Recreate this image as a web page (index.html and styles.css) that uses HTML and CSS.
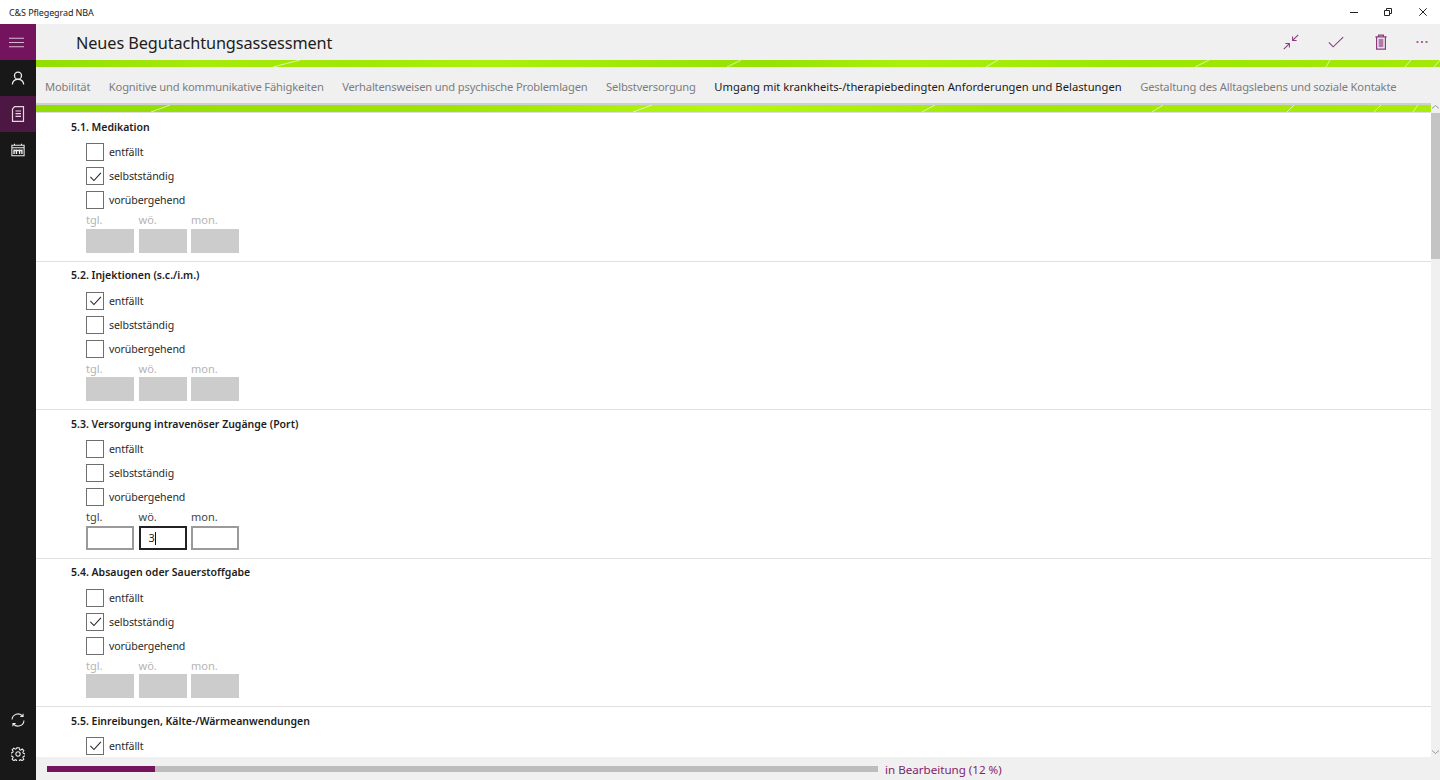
FILE: index.html
```html
<!DOCTYPE html>
<html lang="de">
<head>
<meta charset="utf-8">
<title>C&amp;S Pflegegrad NBA</title>
<link rel="stylesheet" href="styles.css">
</head>
<body>
<div class="titlebar">
  <span class="app-name">C&amp;S Pflegegrad NBA</span>
  <div class="win-controls">
    <svg class="win-ic" viewBox="0 0 8 8"><path d="M0 4.500h8" /></svg>
    <svg class="win-ic" viewBox="0 0 8 8"><path d="M.5 2.500h5v5h-5zM2.500 2.500v-2h5v5h-2" /></svg>
    <svg class="win-ic" viewBox="0 0 8 8"><path d="M.3.300l7.400 7.400M7.700.300l-7.400 7.400" /></svg>
  </div>
</div>
<div class="app">
  <nav class="sidebar">
    <button class="nav-btn nav-menu"><svg viewBox="0 0 16 16" class="nav-ic"><path d="M0 3.500h16M0 8h16M0 12.500h16"/></svg></button>
    <button class="nav-btn"><svg viewBox="0 0 16 16" class="nav-ic ic-bold"><circle cx="8" cy="5.300" r="4"/><path d="M1.500 15.500c.3-3.600 3-6 6.500-6s6.200 2.400 6.500 6"/></svg></button>
    <button class="nav-btn nav-active"><svg viewBox="0 0 16 16" class="nav-ic ic-doc"><path d="M4.500.7h9v14.600H2.500V3zM5.500 5h5.500M5.500 7.700h5.500M5.500 10.400h5.500"/></svg></button>
    <button class="nav-btn"><svg viewBox="0 0 16 16" class="nav-ic"><path d="M1 2.500h14v12H1zM4 .8v2M12 .8v2M1 5.500h14"/><path class="ic-thick" d="M3.500 7.500v5M6.200 7.500v5M9.800 7.500v5M12.500 7.500v5M3.500 8.500h9"/></svg></button>
    <div class="nav-spacer"></div>
    <button class="nav-btn nav-low"><svg viewBox="0 0 16 16" class="nav-ic"><path d="M1.200 7.500A6.800 6.800 0 0 1 13.300 3.600M14.800 8.500A6.800 6.800 0 0 1 2.700 12.400M13.800 .8v3.200h-3.200M2.200 15.200V12h3.200"/></svg></button>
    <button class="nav-btn nav-low"><svg viewBox="0 0 16 16" class="nav-ic"><circle cx="8" cy="8" r="2.500"/><path d="M6.700 .8h2.600l.4 2.100 1.300.6 1.800-1.200 1.900 1.900-1.200 1.800.6 1.300 2.100.4v2.600l-2.100.4-.6 1.300 1.200 1.800-1.900 1.900-1.800-1.200-1.300.6-.4 2.100H6.700l-.4-2.100-1.300-.6-1.800 1.200-1.900-1.900 1.200-1.800-.6-1.300-2.100-.4V6.700l2.100-.4.600-1.300-1.200-1.800 1.900-1.900 1.800 1.200 1.300-.6z"/></svg></button>
  </nav>
  <main class="main">
    <header class="pagehead">
      <h1 class="pagetitle">Neues Begutachtungsassessment</h1>
      <div class="actions">
        <svg class="act-ic" viewBox="0 0 20 20"><path d="M19 1l-7 7M12 3v5h5M1 19l7-7M3 12h5v5"/></svg>
        <svg class="act-ic" viewBox="0 0 20 20"><path d="M1 10.500l5.500 5.500L19 4"/></svg>
        <svg class="act-ic act-trash" viewBox="0 0 20 20"><path d="M3 3.500h14M7 3.500V1.500h6v2M4.500 3.500v15.500h11V3.500"/><rect class="act-fill" x="7" y="6" width="6" height="10.500"/></svg>
        <svg class="act-more" viewBox="0 0 12 16"><path d="M.5 8h2M5 8h2M9.500 8h2"/></svg>
      </div>
    </header>
    <div class="stripe stripe-a">
      <svg class="slashes" viewBox="0 0 1404 7" preserveAspectRatio="none">
        <path d="M237 7L264 0M691 7L705 0M950 7L962 0M1159 7L1173 0M1290 7L1294 0M1369 7L1375 0M1398 7L1404 0"/>
      </svg>
    </div>
    <div class="tabs">
      <span class="tab">Mobilität</span>
      <span class="tab">Kognitive und kommunikative Fähigkeiten</span>
      <span class="tab">Verhaltensweisen und psychische Problemlagen</span>
      <span class="tab">Selbstversorgung</span>
      <span class="tab tab-active">Umgang mit krankheits-/therapiebedingten Anforderungen und Belastungen</span>
      <span class="tab">Gestaltung des Alltagslebens und soziale Kontakte</span>
    </div>
    <div class="body-row">
      <div class="content">
        <div class="stripe stripe-b">
          <svg class="slashes" viewBox="0 0 1395 7" preserveAspectRatio="none">
            <path d="M115 7L134 0M597 7L616 0M886 7L899 0M1116 7L1127 0M1251 7L1258 0M1338 7L1345 0M1377 7L1382 0"/>
          </svg>
        </div>
        <div class="form">
          <section class="item">
            <h2 class="item-title">5.1. Medikation</h2>
            <label class="check"><span class="box"></span>entfällt</label>
            <label class="check"><span class="box"><svg viewBox="0 0 14 14" class="tick"><path d="M1.500 7.500l3.800 3.800L12.800 3"/></svg></span>selbstständig</label>
            <label class="check"><span class="box"></span>vorübergehend</label>
            <div class="freq freq-off">
              <div class="f"><span class="f-label">tgl.</span><span class="f-input"></span></div>
              <div class="f"><span class="f-label">wö.</span><span class="f-input"></span></div>
              <div class="f"><span class="f-label">mon.</span><span class="f-input"></span></div>
            </div>
          </section>
          <section class="item">
            <h2 class="item-title">5.2. Injektionen (s.c./i.m.)</h2>
            <label class="check"><span class="box"><svg viewBox="0 0 14 14" class="tick"><path d="M1.500 7.500l3.800 3.800L12.800 3"/></svg></span>entfällt</label>
            <label class="check"><span class="box"></span>selbstständig</label>
            <label class="check"><span class="box"></span>vorübergehend</label>
            <div class="freq freq-off">
              <div class="f"><span class="f-label">tgl.</span><span class="f-input"></span></div>
              <div class="f"><span class="f-label">wö.</span><span class="f-input"></span></div>
              <div class="f"><span class="f-label">mon.</span><span class="f-input"></span></div>
            </div>
          </section>
          <section class="item">
            <h2 class="item-title">5.3. Versorgung intravenöser Zugänge (Port)</h2>
            <label class="check"><span class="box"></span>entfällt</label>
            <label class="check"><span class="box"></span>selbstständig</label>
            <label class="check"><span class="box"></span>vorübergehend</label>
            <div class="freq">
              <div class="f"><span class="f-label">tgl.</span><span class="f-input"></span></div>
              <div class="f"><span class="f-label">wö.</span><span class="f-input f-focus">3<i class="caret"></i></span></div>
              <div class="f"><span class="f-label">mon.</span><span class="f-input"></span></div>
            </div>
          </section>
          <section class="item">
            <h2 class="item-title">5.4. Absaugen oder Sauerstoffgabe</h2>
            <label class="check"><span class="box"></span>entfällt</label>
            <label class="check"><span class="box"><svg viewBox="0 0 14 14" class="tick"><path d="M1.500 7.500l3.800 3.800L12.800 3"/></svg></span>selbstständig</label>
            <label class="check"><span class="box"></span>vorübergehend</label>
            <div class="freq freq-off">
              <div class="f"><span class="f-label">tgl.</span><span class="f-input"></span></div>
              <div class="f"><span class="f-label">wö.</span><span class="f-input"></span></div>
              <div class="f"><span class="f-label">mon.</span><span class="f-input"></span></div>
            </div>
          </section>
          <section class="item">
            <h2 class="item-title">5.5. Einreibungen, Kälte-/Wärmeanwendungen</h2>
            <label class="check"><span class="box"><svg viewBox="0 0 14 14" class="tick"><path d="M1.500 7.500l3.800 3.800L12.800 3"/></svg></span>entfällt</label>
          </section>
        </div>
      </div>
      <div class="scrollbar">
        <svg class="sb-arrow" viewBox="0 0 9 6"><path d="M1 4.500l3.500-3 3.500 3"/></svg>
        <div class="sb-thumb"></div>
        <div class="sb-space"></div>
        <svg class="sb-arrow sb-arrow-down" viewBox="0 0 9 6"><path d="M1 1.500l3.500 3 3.500-3"/></svg>
      </div>
    </div>
    <footer class="status">
      <div class="progress"><div class="progress-fill" style="width:13%"></div></div>
      <span class="status-text">in Bearbeitung (12 %)</span>
    </footer>
  </main>
</div>
</body>
</html>
```
FILE: styles.css
```css
* { box-sizing: border-box; }
html, body { margin: 0; height: 100%; overflow: hidden; }
body { width: 1440px; height: 780px; background: #fff; font-family: "Noto Sans", "Open Sans", sans-serif; color: #1d1d1d; display: flex; flex-direction: column; }

.titlebar { height: 24px; flex: none; display: flex; align-items: center; justify-content: space-between; background: #fff; }
.app-name { font-size: 9px; letter-spacing: -.1px; margin-left: 9px; color: #222; }
.win-controls { display: flex; }
.win-ic { width: 8px; height: 8px; margin: 0 13.250px; fill: none; stroke: #222; stroke-width: 1; }

.app { flex: 1; display: flex; min-height: 0; }
.sidebar { width: 36px; flex: none; background: #181818; display: flex; flex-direction: column; padding-bottom: 9px; }
.nav-btn { width: 36px; height: 36px; padding: 0; border: 0; background: none; display: flex; align-items: center; justify-content: center; flex: none; }
.nav-low { height: 34px; }
.nav-menu { background: #74145f; }
.nav-active { background: #4d1744; }
.nav-spacer { flex: 1; }
.nav-ic { width: 14px; height: 14px; fill: none; stroke: #eee; stroke-width: 1.200; }
.ic-bold { stroke-width: 1.500; }
.ic-thick { stroke-width: 1.600; }
.ic-doc { width: 16px; height: 16px; stroke: #e6d5e2; }
.nav-menu .nav-ic { stroke: #d9b9d2; width: 15px; height: 15px; margin-right: 3px; stroke-width: 1.100; }

.main { flex: 1; min-width: 0; display: flex; flex-direction: column; }
.pagehead { height: 36px; flex: none; background: #f0f0f0; display: flex; align-items: center; justify-content: space-between; }
.pagetitle { margin: 1px 0 0 40px; font-size: 16.300px; letter-spacing: -.1px; font-weight: 400; color: #1d1d1d; }
.actions { display: flex; align-items: center; gap: 29px; margin-right: 12px; }
.act-ic { width: 16px; height: 16px; fill: none; stroke: #8a3a7c; stroke-width: 1.300; }
.act-trash { stroke-width: 1.500; }
.act-fill { fill: #b27aa8; stroke: none; }
.act-more { width: 12px; height: 16px; margin-left: -2px; fill: none; stroke: #8a3a7c; stroke-width: 1.300; }

.stripe { position: relative; height: 7px; flex: none; overflow: hidden; background: linear-gradient(90deg, #93dd05 0%, #a7ea0b 12%, #a0e606 22%, #abf00d 32%, #97e005 52%, #abf00d 62%, #9ce505 78%, #a3e808 100%); }
.stripe-b { background: linear-gradient(90deg, #93dd05 0%, #9ee506 30%, #b4f810 50%, #a0e806 70%, #a8ec08 100%); }
.slashes { display: block; width: 100%; height: 100%; fill: none; stroke: rgba(255,255,255,.65); stroke-width: 1; }

.tabs { height: 36px; flex: none; background: #f0f0f0; display: flex; align-items: center; gap: 18.500px; padding: 2px 0 0 9px; font-size: 11.200px; letter-spacing: -.17px; white-space: nowrap; overflow: hidden; }
.tab { color: #7d7d7d; }
.tab-active { color: #1a1a1a; letter-spacing: .02px; }

.body-row { flex: 1; min-height: 0; display: flex; }
.content { flex: 1; min-width: 0; display: flex; flex-direction: column; background: #f0f0f0; }
.content .stripe-b { margin-top: 2px; box-shadow: 0 -2px 0 #d0d0d0; }
.form { flex: 1; min-height: 0; overflow: hidden; background: #fff; border-top: 1px solid #dedede; padding-top: .5px; }
.item { height: 148.400px; border-bottom: 1px solid #e0e0e0; padding: 5.500px 0 0 35px; }
.item:last-child { border-bottom: 0; }
.item-title { margin: 0 0 5.400px; font-size: 10.500px; line-height: 16px; font-weight: 600; color: #1d1d1d; }
.check { display: flex; align-items: center; height: 24px; margin-left: 15px; font-size: 10.600px; letter-spacing: -.1px; color: #2a2a2a; gap: 5px; }
.box { width: 18px; height: 18px; border: 1px solid #6f6f6f; display: flex; align-items: center; justify-content: center; flex: none; background: #fff; }
.tick { width: 13px; height: 13px; fill: none; stroke: #222; stroke-width: 1.100; }

.freq { display: flex; gap: 4.500px; margin-left: 15px; }
.f { display: flex; flex-direction: column; width: 48px; }
.f-label { font-size: 11px; line-height: 16px; color: #444; height: 16.600px; }
.f-input { height: 24px; border: 2px solid #9a9a9a; background: #fff; font-size: 11px; line-height: 20px; padding-left: 8px; }
.f-focus { border-color: #222; }
.caret { display: inline-block; width: 1px; height: 13px; background: #111; vertical-align: -3px; }
.freq-off .f-label { color: #b4b4b4; }
.freq-off .f-input { background: #ccc; border-color: #ccc; }

.scrollbar { width: 9px; flex: none; background: #f0f0f0; display: flex; flex-direction: column; align-items: center; }
.sb-arrow { width: 9px; height: 6px; flex: none; margin: 1px 0 3px; fill: none; stroke: #999; stroke-width: 1; }
.sb-arrow-down { margin: 0 0 2px; }
.sb-thumb { width: 9px; height: 146px; background: #c4c4c4; flex: none; }
.sb-space { flex: 1; }

.status { height: 23px; flex: none; background: #f0f0f0; display: flex; align-items: center; padding-left: 11px; gap: 7px; }
.progress { width: 831px; height: 6px; background: #bdbdbd; }
.progress-fill { height: 100%; background: #74145f; }
.status-text { font-size: 11.600px; margin-top: 2px; color: #80246d; }
```
